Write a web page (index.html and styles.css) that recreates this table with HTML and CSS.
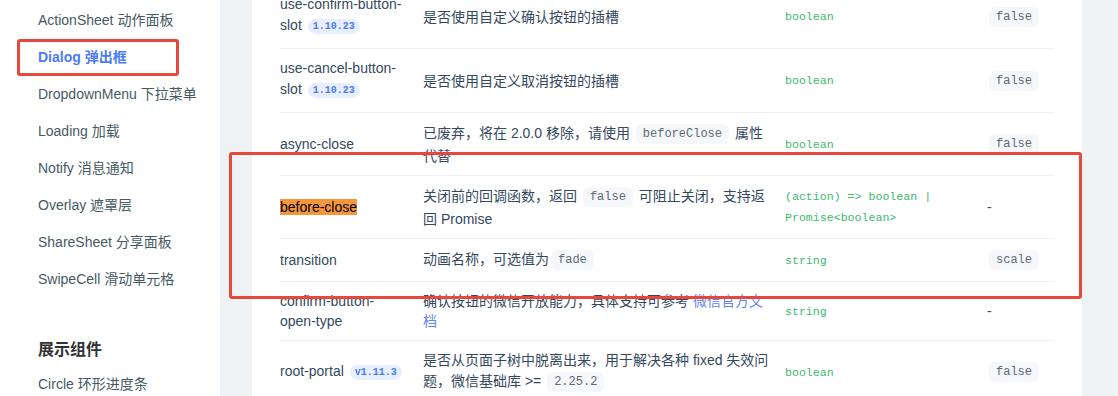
FILE: index.html
```html
<!DOCTYPE html>
<html lang="zh-CN">
<head>
<meta charset="utf-8">
<title>Dialog 弹出框</title>
<link rel="stylesheet" href="styles.css">
</head>
<body>
<div class="page">
  <nav class="sidebar">
    <a class="nav-item">ActionSheet 动作面板</a>
    <a class="nav-item active">Dialog 弹出框</a>
    <a class="nav-item">DropdownMenu 下拉菜单</a>
    <a class="nav-item">Loading 加载</a>
    <a class="nav-item">Notify 消息通知</a>
    <a class="nav-item">Overlay 遮罩层</a>
    <a class="nav-item">ShareSheet 分享面板</a>
    <a class="nav-item">SwipeCell 滑动单元格</a>
    <div class="nav-group">展示组件</div>
    <a class="nav-item">Circle 环形进度条</a>
  </nav>
  <main class="content">
    <section class="card">
      <table class="props">
        <colgroup>
          <col class="col-name">
          <col class="col-desc">
          <col class="col-type">
          <col>
        </colgroup>
        <tbody>
          <tr>
            <td>use-confirm-button-slot <span class="badge">1.10.23</span></td>
            <td>是否使用自定义确认按钮的插槽</td>
            <td class="type">boolean</td>
            <td><code>false</code></td>
          </tr>
          <tr>
            <td>use-cancel-button-slot <span class="badge">1.10.23</span></td>
            <td>是否使用自定义取消按钮的插槽</td>
            <td class="type">boolean</td>
            <td><code>false</code></td>
          </tr>
          <tr>
            <td>async-close</td>
            <td>已废弃，将在 2.0.0 移除，请使用 <code>beforeClose</code> 属性代替</td>
            <td class="type">boolean</td>
            <td><code>false</code></td>
          </tr>
          <tr>
            <td><mark class="hit">before-close</mark></td>
            <td>关闭前的回调函数，返回 <code>false</code> 可阻止关闭，支持返回 Promise</td>
            <td class="type">(action) =&gt; boolean | Promise&lt;boolean&gt;</td>
            <td>-</td>
          </tr>
          <tr>
            <td>transition</td>
            <td>动画名称，可选值为<code>fade</code></td>
            <td class="type">string</td>
            <td><code>scale</code></td>
          </tr>
          <tr>
            <td>confirm-button-<span class="nowrap">open-type</span></td>
            <td>确认按钮的微信开放能力，具体支持可参考 <a class="link">微信官方文档</a></td>
            <td class="type">string</td>
            <td>-</td>
          </tr>
          <tr>
            <td>root-portal <span class="badge">v1.11.3</span></td>
            <td>是否从页面子树中脱离出来，用于解决各种 fixed 失效问题，微信基础库 &gt;= <code>2.25.2</code></td>
            <td class="type">boolean</td>
            <td><code>false</code></td>
          </tr>
        </tbody>
      </table>
    </section>
  </main>
  <div class="mark mark-nav"></div>
  <div class="mark mark-rows"></div>
</div>
</body>
</html>
```
FILE: styles.css
```css
html, body {
  margin: 0;
  padding: 0;
}

body {
  font-family: "Liberation Sans", "Noto Sans CJK SC", sans-serif;
  font-size: 14px;
  color: #34495e;
  background: #eff2f5;
  overflow: hidden;
}

.page {
  position: relative;
  display: flex;
  height: 396px;
  overflow: hidden;
}

.sidebar {
  flex: none;
  width: 220px;
  padding-top: 2px;
  background: #fff;
  display: flex;
  flex-direction: column;
}

.nav-item {
  display: block;
  height: 37px;
  padding-left: 38px;
  line-height: 37px;
  color: #455a64;
  text-decoration: none;
  white-space: nowrap;
}

.nav-item.active {
  color: #4c7cf3;
  font-weight: 700;
}

.nav-group {
  padding: 38px 0 0 38px;
  margin-bottom: 2px;
  line-height: 28px;
  font-size: 16px;
  font-weight: 700;
  color: #323233;
}

.content {
  flex: 1;
  display: flex;
  flex-direction: column;
  padding: 0 36px 0 32px;
}

.card {
  flex: 1;
  padding: 0 28px;
  background: #fff;
}

.props {
  width: 100%;
  margin-top: -16px;
  table-layout: fixed;
  border-collapse: collapse;
  line-height: 20px;
  color: #34495e;
}

.col-name { width: 143px; }
.col-desc { width: 362px; }
.col-type { width: 202px; }

.props td {
  padding: 9px 10px 9px 0;
  border-top: 1px solid #eef0f3;
  vertical-align: middle;
  word-wrap: break-word;
}

.props td.type {
  font-family: "Liberation Mono", monospace;
  font-size: 11.6px;
  line-height: 21px;
  color: #3dba6f;
}

.props code {
  display: inline-block;
  margin: 2px 2px;
  padding: 0 7px;
  height: 20px;
  line-height: 20px;
  font-family: "Liberation Mono", monospace;
  font-size: 12px;
  color: #5c6b77;
  background: #f5f7fa;
  border-radius: 6px;
  vertical-align: middle;
}

.nowrap {
  white-space: nowrap;
}

.badge {
  display: inline-block;
  margin: 5px 0 5px 2px;
  padding: 0 5px;
  height: 15px;
  line-height: 15px;
  font-family: "Liberation Mono", monospace;
  font-size: 10px;
  font-weight: 700;
  color: #4c7cf3;
  background: #e6eeff;
  border-radius: 8px;
  vertical-align: middle;
}

.hit {
  background: #f5963a;
  color: #000;
}

.link {
  color: #5e86f7;
  text-decoration: none;
}

.mark {
  position: absolute;
  box-sizing: border-box;
  border: 3px solid #e8473c;
  border-radius: 3px;
  pointer-events: none;
}

.mark-nav {
  left: 17px;
  top: 39px;
  width: 162px;
  height: 37px;
}

.mark-rows {
  left: 229px;
  top: 152px;
  width: 853px;
  height: 147px;
}
```
